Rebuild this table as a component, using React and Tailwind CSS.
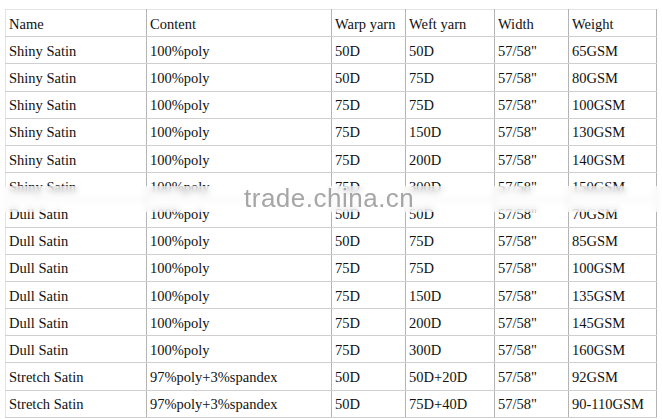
const rows = [
  ["Shiny Satin", "100%poly", "50D", "50D", "57/58\"", "65GSM"],
  ["Shiny Satin", "100%poly", "50D", "75D", "57/58\"", "80GSM"],
  ["Shiny Satin", "100%poly", "75D", "75D", "57/58\"", "100GSM"],
  ["Shiny Satin", "100%poly", "75D", "150D", "57/58\"", "130GSM"],
  ["Shiny Satin", "100%poly", "75D", "200D", "57/58\"", "140GSM"],
  ["Shiny Satin", "100%poly", "75D", "300D", "57/58\"", "150GSM"],
  ["Dull Satin", "100%poly", "50D", "50D", "57/58\"", "70GSM"],
  ["Dull Satin", "100%poly", "50D", "75D", "57/58\"", "85GSM"],
  ["Dull Satin", "100%poly", "75D", "75D", "57/58\"", "100GSM"],
  ["Dull Satin", "100%poly", "75D", "150D", "57/58\"", "135GSM"],
  ["Dull Satin", "100%poly", "75D", "200D", "57/58\"", "145GSM"],
  ["Dull Satin", "100%poly", "75D", "300D", "57/58\"", "160GSM"],
  ["Stretch Satin", "97%poly+3%spandex", "50D", "50D+20D", "57/58\"", "92GSM"],
  ["Stretch Satin", "97%poly+3%spandex", "50D", "75D+40D", "57/58\"", "90-110GSM"],
]

const header = ["Name", "Content", "Warp yarn", "Weft yarn", "Width", "Weight"]

const cell =
  "h-[27.2px] border-b border-b-[#cfcfcf] border-r border-r-[#b4b4b4] pl-[3px] pt-[3px] align-middle whitespace-nowrap font-['Liberation_Serif','Times_New_Roman',serif] text-[14.5px] text-[#111]"

export default function App() {
  return (
    <div className="relative w-[662px] h-[419px] bg-white overflow-hidden font-['Liberation_Serif',serif]">
      <div className="pt-[9px] pl-[5px]">
        <table className="border-collapse table-fixed w-[651px] border-t border-t-[#e4e4e4] border-l border-l-[#e4e4e4]">
          <colgroup>
            <col className="w-[141px]" />
            <col className="w-[185px]" />
            <col className="w-[74px]" />
            <col className="w-[89px]" />
            <col className="w-[74px]" />
            <col className="w-[88px]" />
          </colgroup>
          <tbody>
            <tr>
              {header.map((h) => (
                <td key={h} className={cell}>{h}</td>
              ))}
            </tr>
            {rows.map((r, i) => (
              <tr key={i}>
                {r.map((c, j) => (
                  <td key={j} className={cell}>{c}</td>
                ))}
              </tr>
            ))}
          </tbody>
        </table>
      </div>

      {/* watermark band */}
      <div className="absolute left-0 top-[186px] w-[662px] h-[26px] bg-white/55 backdrop-blur-[3px]" />
      <div className="absolute left-[244px] top-[183px] font-['Liberation_Sans',sans-serif] text-[26px] leading-[30px] tracking-[0.5px] text-[#a6a6a6]">
        trade.china.cn
      </div>
    </div>
  )
}
